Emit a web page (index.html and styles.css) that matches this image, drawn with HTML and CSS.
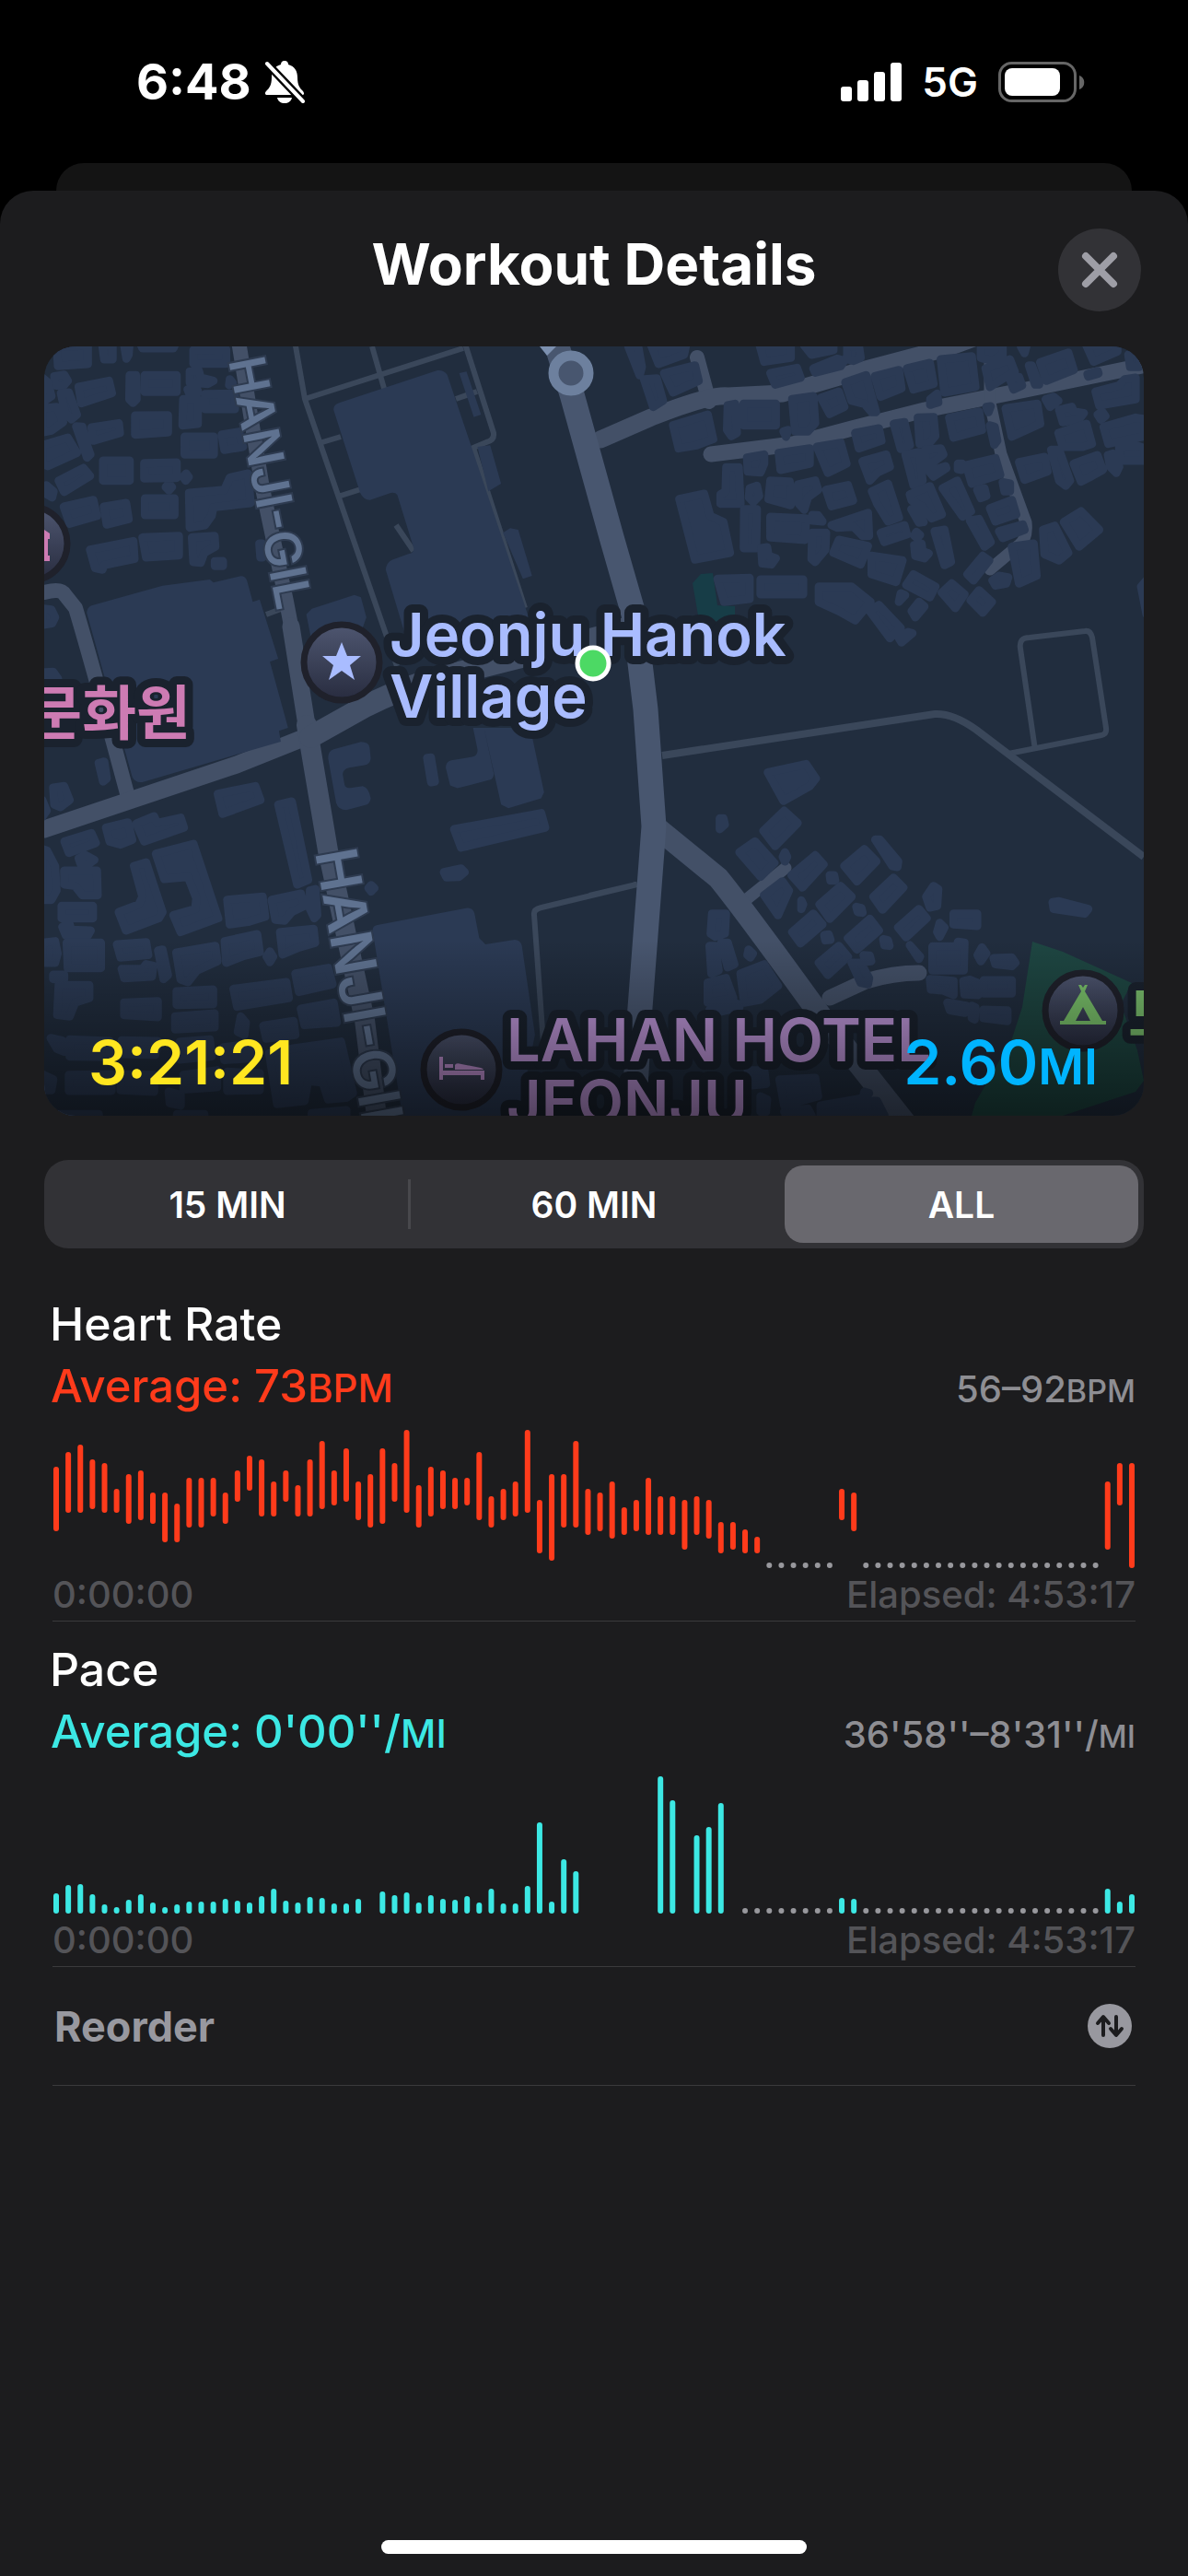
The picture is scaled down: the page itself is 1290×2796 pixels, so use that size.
FILE: index.html
```html
<!DOCTYPE html>
<html lang="en">
<head>
  <meta charset="UTF-8" />
  <meta name="viewport" content="width=device-width, initial-scale=1.0"/>
  <title>Workout Details</title>
  <link rel="stylesheet" href="styles.css">
</head>
<body>
  <div class="status-bar">
    <div class="status-left">
      <span class="clock">6:48</span>
      <svg class="bell" viewBox="0 0 44 46" width="44" height="46">
        <path fill="#fff" d="M22 0c3 0 4 2 4 4 7 2 10 7 10 14 0 9 3 12 6 15 2 3 1 4-1 4H3c-2 0-3-2-1-4 3-3 6-6 6-15C8 11 11 6 18 4c0-2 1-4 4-4zM14 40h16c-1 4-4 6-8 6s-7-2-8-6z"/>
        <path stroke="#000" stroke-width="9" stroke-linecap="round" d="M4 4l38 40"/>
        <path stroke="#fff" stroke-width="4" stroke-linecap="round" d="M3 3l39 41"/>
      </svg>
    </div>
    <div class="status-right">
      <svg viewBox="0 0 66 42" width="66" height="42" fill="#fff">
        <rect x="0" y="26" width="12" height="16" rx="3"/>
        <rect x="18" y="19" width="12" height="23" rx="3"/>
        <rect x="36" y="10" width="12" height="32" rx="3"/>
        <rect x="54" y="0" width="12" height="42" rx="3"/>
      </svg>
      <span class="network">5G</span>
      <svg viewBox="0 0 94 44" width="94" height="44">
        <rect x="1.5" y="1.5" width="82" height="41" rx="13" fill="none" stroke="#666" stroke-width="3"/>
        <rect x="7" y="7" width="60" height="30" rx="8" fill="#fff"/>
        <path fill="#666" d="M88 15c7 2 7 13 0 15z"/>
      </svg>
    </div>
  </div>
  <div class="back-card"></div>
  <main class="sheet">
    <header class="sheet-header">
      <h1>Workout Details</h1>
      <button class="close" aria-label="Close">
        <svg viewBox="0 0 40 40" width="40" height="40"><path stroke="#9e9ea6" stroke-width="8" stroke-linecap="round" d="M5 5l30 30M35 5L5 35"/></svg>
      </button>
    </header>

    <div class="map">
      <svg class="map-canvas" viewBox="48 376 1194 835" xml:lang="ko">
        <defs>
          <linearGradient id="pin" x1="0" y1="0" x2="0" y2="1">
            <stop offset="0" stop-color="#4e5670"/><stop offset="1" stop-color="#282c3f"/>
          </linearGradient>
          <linearGradient id="shade" x1="0" y1="0" x2="0" y2="1">
            <stop offset="0" stop-opacity="0"/><stop offset="1" stop-opacity=".55"/>
          </linearGradient>
        </defs>
        <rect x="48" y="376" width="1194" height="835" fill="#212d3e"/>

        <!-- footpaths -->
        <g class="path">
          <path d="M320 370L331 433 431 723M331 433L503 378M404 376L418 425M504 370L536 470Q537 478 528 480L514 486 570 660M350 480L370 474M370 538L392 531M495 433L518 425M289 667L305 661M430 570L449 598"/>
          <path d="M1124 814L1108 704Q1106 692 1118 692L1178 685Q1184 684 1186 692L1201 790Q1202 797 1196 798L1095 818"/>
          <path d="M640 972L691 960M692 960L588 985Q579 987 580 993L592 1160"/>
          <path class="wide" d="M719 820L1015 775Q1035 774 1060 792L1242 930"/>
        </g>
        <!-- streets -->
        <g class="road">
          <path stroke-width="16" d="M48 643Q66 638 70 645L82 660Q100 720 139 865M259 370L285 530 311 653 320 700M757 388L770 436"/>
          <path stroke-width="19" d="M316 680L333 787M48 900L257 830 337 798M652 477L707 453Q770 428 790 430L850 427 925 405 1027 378 1060 366"/>
          <path stroke-width="22" d="M333 787L356 923 396 1107 410 1220"/>
          <path stroke-width="24" d="M337 800L396 767Q450 740 499 730L657 690 690 678"/>
          <path stroke-width="17" d="M772 493L861 482 925 465 1004 445 1114 423 1250 395M901 1083L940 1065Q970 1056 998 1056"/>
          <path stroke-width="13" d="M1075 393L1075 437 1087 493 1114 567Q1116 585 1106 592L1075 618M812 975L853 942"/>
          <path stroke-width="24" d="M715 900L780 953Q810 990 893 1105L988 1225"/>
          <path class="main" d="M600 360L621 428 664 583 689 670 701 770 710 897 694 1107 688 1220"/>
        </g>

        <!-- parks -->
        <path fill="#173d47" d="M752 633L761 623 774 622 779 657 798 658 798 668 776 675 758 668z"/>
        <path fill="#1e4642" d="M1121 1022L1154 1033 1229 1067 1217 1090 1235 1140 1242 1173 1233 1185 1154 1211 1055 1211 1059 1197 1099 1127 1110 1093z"/>

        <!-- large blocks -->
        <g fill="#2b3a54" transform="translate(40 370) scale(.3954 .3333)">
          <path d="M137 885Q138 868 150 862L345 797 475 777 485 787 560 766Q572 765 577 780L593 850 612 842 663 1035 640 1045 690 1260 665 1270 670 1305 290 1437Q270 1440 262 1420z"/>
          <path d="M815 225Q814 208 830 202L1100 96Q1118 94 1127 110L1345 880 1370 970 1025 1010 958 745Q960 722 975 713L1022 693Q1036 690 1035 675L990 502Q985 493 972 495L915 518Q897 518 888 495z"/>
          <path d="M1160 105L1180 100 1220 240 1200 248zM1210 345L1245 340 1275 465 1240 490zM1280 625L1300 610 1322 615 1360 765 1335 775zM740 890L755 872 872 827 890 835 905 900 890 950 760 1010z"/>
          <path d="M922 1920Q922 1904 935 1902L1182 1847Q1198 1846 1202 1865L1215 1945 1232 1965 1312 1950Q1328 1950 1332 1970L1368 2260 1340 2420 1335 2530 1005 2530z"/>
          <path d="M800 1360Q800 1335 815 1330L890 1306Q912 1306 914 1325L917 1360Q915 1380 900 1382L858 1390Q840 1395 840 1412L845 1445Q848 1460 865 1455L895 1450Q912 1455 917 1490 915 1510 900 1512L850 1528Q828 1528 822 1505z"/>
          <path d="M1123 1390Q1123 1370 1138 1366L1195 1355Q1212 1350 1210 1330L1198 1260 1228 1260 1255 1410Q1255 1425 1243 1430L1155 1457 1135 1448zM1228 1260L1355 1260 1393 1470 1385 1490 1295 1522 1275 1510z"/>
        </g>

        <!-- houses, one group per map tile -->
        <g class="houses" transform="translate(40 370) scale(.3954 .3333)">
          <path d="M55 20 140 15 140 75 58 82zM180 15 208 15 208 60 185 60zM240 15 254 15 252 45 246 58zM285 10 380 10 375 24 290 24zM430 30 520 28 520 74 430 74zM48 115 75 110 85 130 72 148 50 145zM115 150 198 130 206 170 122 203zM255 112 272 112 274 190 264 202 254 190zM296 112 384 112 384 166 296 166zM420 100 445 98 450 120 485 130 470 140 420 135zM414 158 442 162 440 172 418 170zM530 125 538 137 528 144zM462 173 544 172 544 222 462 222zM402 190 442 190 442 270 400 275z"/>
          <path d="M15 120 30 135 40 180 15 200zM66 170 88 168 110 240 95 255 78 235zM15 220 55 215 72 265 40 292 15 298zM150 282 225 268 228 300 155 325zM270 243 360 242 360 298 270 305zM406 312 486 312 486 370 406 370zM508 305 555 296 566 345 515 355zM108 278 125 280 135 330 147 370 138 380zM15 340 85 315 110 365 30 408 15 400zM182 390 255 390 255 455 182 455zM295 398 384 396 384 446 295 448zM60 455 128 414 146 440 75 492zM410 432 417 443 409 455 402 443zM363 465 371 476 363 487 354 476zM26 470 46 490 42 510 28 500z"/>
          <path d="M74 540 155 518 165 570 90 595zM184 540 245 528 252 580 192 598zM297 513 378 513 378 567 297 567zM418 495 515 485 530 445 580 432 587 528 485 542 480 570 462 600 420 608zM146 680 265 652 268 710 185 730 180 745 160 740zM290 640 390 635 390 698 300 705zM426 640 488 635 490 670 460 690 450 722 430 720zM489 718 511 717 511 733 489 733zM611 660 618 660 620 705 614 705zM15 872 40 875 50 900 42 920 15 925zM15 1080 45 1078 58 1100 15 1110z"/>
        </g>
        <g class="houses" transform="translate(640 370) scale(.3954 .3333)">
          <path d="M107 18 134 18 144 85 138 112zM170 15 265 15 260 45 190 75zM150 125 185 122 202 195 175 215zM205 105 290 80 300 130 230 168zM468 15 553 15 553 55 480 68zM497 105 570 88 580 120 510 142zM590 15 670 15 670 30 610 45zM615 90 680 58 700 65 690 82 620 103zM708 20 740 15 745 55 725 65 708 60zM230 275 325 240 340 320 295 340 245 350zM380 210 400 205 405 300 390 310 378 290zM423 205 512 205 512 275 423 275zM557 190 615 180 620 268 600 295 565 295zM636 185 685 165 700 215 660 238zM703 135 760 112 770 160 787 232 775 232 755 205 720 195zM784 115 850 95 857 155 800 182z"/>
          <path d="M872 90 935 72 945 140 890 158zM965 60 1050 50 1060 150 975 168zM1075 15 1135 15 1135 45 1105 65 1075 55zM1088 90 1155 60 1168 100 1140 120 1100 150zM1155 125 1180 118 1188 145 1165 158zM1185 18 1200 18 1195 40zM1207 80 1215 80 1235 142 1224 142zM1238 70 1315 38 1330 95 1255 130zM1365 15 1450 15 1450 35 1385 68zM1480 45 1510 45 1510 85 1485 85zM1368 108 1396 98 1398 106 1370 116zM1390 165 1455 145 1470 125 1500 120 1500 190 1400 210zM1143 220 1230 205 1238 270 1160 312zM1253 190 1275 182 1288 195 1265 215zM1290 225 1325 215 1330 230 1358 235 1345 255 1300 265zM1396 240 1408 230 1417 245 1405 257zM988 250 1070 230 1078 290 1000 315zM902 250 945 248 950 310 930 338 907 335zM836 270 865 265 880 340 855 352zM730 300 795 285 802 325 740 350z"/>
          <path d="M1288 300 1365 270 1380 335 1355 345 1300 345zM1412 280 1500 250 1525 255 1525 310 1425 335zM1455 350 1500 340 1525 350 1525 390 1460 390zM1424 372 1438 367 1455 410 1447 430 1430 410zM1330 400 1395 372 1410 420 1380 440 1350 458zM1268 355 1290 355 1320 455 1308 472 1290 455zM1180 395 1250 378 1258 425 1195 452zM1035 405 1115 382 1128 435 1050 465zM1100 275 1113 280 1120 325 1112 338zM1090 215 1102 213 1096 232zM936 190 955 172 958 200 936 208zM1012 400 1024 400 1022 420 1012 418zM922 355 965 350 972 370 950 390 925 405zM933 425 978 408 980 415 945 442zM868 370 905 362 915 455 890 470zM750 392 815 370 825 410 790 430 770 455zM625 345 690 332 706 400 655 430zM520 365 605 350 605 400 525 420zM433 380 480 370 480 400 470 428 435 425zM376 412 410 412 415 530 360 530 360 500 374 490zM533 295 545 290 540 312z"/>
          <path d="M440 480 460 472 466 505 450 525 438 510zM497 455 550 458 553 535 492 515zM573 468 620 455 628 485 600 510 590 550 575 530zM650 485 710 470 724 520 665 538zM776 490 820 465 850 575 820 588 790 530zM880 500 935 473 968 565 940 578 915 540 885 520zM884 548 895 546 918 590 905 592zM970 480 1010 455 1048 555 1025 572zM1065 485 1085 480 1090 505 1075 512zM1135 460 1155 465 1155 490 1140 490zM1100 545 1160 518 1172 565 1115 588zM1125 620 1190 598 1195 615 1135 642zM1045 585 1070 580 1102 655 1085 670zM1246 615 1278 602 1315 690 1290 715 1250 695zM1303 590 1350 555 1400 615 1345 670zM247 515 315 498 332 570 368 590 386 690 290 712zM425 548 460 548 458 675 424 675zM497 573 595 578 592 648 497 640zM612 567 628 568 640 588 612 585zM612 625 650 625 648 680 620 720 610 710z"/>
          <path d="M665 600 765 560 768 635 750 635 725 605 680 608zM800 625 865 600 872 630 810 655zM898 622 908 632 900 642 892 634zM892 665 912 660 915 685 932 692 920 708 895 700zM948 620 975 615 993 720 975 730zM472 675 488 672 492 700 512 708 500 728 475 725zM670 690 685 648 765 668 745 728zM775 700 860 715 842 785 775 760zM870 795 890 760 950 800 935 835zM1038 760 1080 700 1098 715 1055 780zM1160 670 1220 660 1228 765 1180 790zM1107 780 1125 765 1150 770 1145 790 1115 797zM630 800 720 800 772 850 730 910 685 880 630 850zM770 880 795 860 855 935 825 968zM855 822 867 828 850 850zM885 880 905 850 920 865 895 900zM968 820 995 790 1030 825 1005 870zM1047 845 1070 812 1105 850 1080 885zM850 968 875 948 887 952 857 982zM352 775 440 772 440 840 370 850zM470 777 587 777 587 825 470 825zM1515 800 1530 780 1530 890z"/>
        </g>
        <g class="houses" transform="translate(40 790) scale(.3954 .3333)">
          <path d="M497 215 600 190 614 235 510 280zM663 250 700 240 745 495 715 510zM1072 98 1082 97 1093 175 1083 177zM1146 330 1385 278 1396 325 1165 390zM1118 470 1165 458 1175 470 1160 485 1125 487zM918 512 927 522 918 533 911 522zM45 195 75 190 90 235 65 258 48 250zM170 115 185 110 192 165 182 175zM15 235 27 270 15 290zM76 370 150 343 162 375 88 407zM115 425 135 415 158 430 140 445 120 443zM190 325 250 308 262 365 230 380 200 370zM273 312 322 288 330 310 395 293 404 325 295 370zM15 395 28 400 50 450 54 530 40 560 15 560zM75 465 165 465 167 545 125 545 105 515 76 510zM68 580 154 580 154 620 68 620zM70 648 90 640 95 658 148 660 140 677 80 677z"/>
          <path d="M82 700 176 700 176 782 85 782zM15 700 50 695 57 735 50 765 15 765zM45 804 75 804 75 818 45 818zM60 838 144 838 144 880 105 895 90 940 56 935zM267 450 300 438 345 600 335 620 245 660 225 600 280 575 290 550zM327 410 430 378 498 620 395 665 375 610 435 590 438 555 415 485 350 492zM523 560 620 550 627 615 580 632 530 640zM645 560 725 540 735 580 700 600 680 628 655 625zM750 530 765 525 770 610 762 620 750 590zM220 705 300 698 306 740 230 748zM233 785 290 785 300 770 320 775 316 810 240 815zM333 725 345 722 360 805 348 818zM383 732 490 710 496 760 440 790 415 828 395 820zM516 695 605 672 612 730 570 742 520 765zM668 665 760 655 764 700 720 715 675 738zM640 728 649 745 640 763 631 745z"/>
          <path d="M710 800 800 782 812 835 720 860zM540 850 685 828 692 880 550 908zM384 858 484 852 484 900 384 902zM380 940 488 930 488 975 380 982zM240 895 332 890 332 942 240 935zM560 940 574 960 570 1000 552 990zM622 970 705 955 710 1000 630 1012zM725 915 815 895 824 960 735 968zM638 1060 700 1045 835 1022 868 1190 850 1205 800 1210 785 1155 745 1150 735 1215 660 1225zM38 1010 70 1018 75 1055 55 1045zM90 1015 200 1020 200 1072 90 1070zM233 1018 332 1020 325 1065 233 1062zM393 1022 475 1015 480 1070 393 1080zM513 1040 595 1028 600 1075 515 1082zM88 1130 205 1128 205 1182 88 1182zM230 1128 322 1130 322 1185 230 1180zM403 1130 495 1115 495 1170 403 1178zM523 1120 612 1125 612 1180 523 1182zM362 1185 395 1195 395 1230 365 1222zM15 1128 45 1145 40 1180 15 1180zM60 1258 170 1258 170 1270 60 1270zM385 1258 460 1258 460 1270 385 1270zM755 1255 850 1245 850 1270 755 1270z"/>
        </g>
        <g class="houses" transform="translate(640 790) scale(.3954 .3333)">
          <path d="M490 145 595 118 622 165 605 190 533 238zM478 335 535 270 572 310 510 385zM412 405 455 370 508 440 470 485zM358 295 368 295 372 315 358 330zM555 480 620 415 643 445 585 520zM700 450 755 395 788 435 735 500zM785 364 798 364 848 435 846 453 832 450zM480 545 530 500 548 530 518 610zM632 575 690 515 720 550 660 622zM780 550 835 488 862 520 805 592zM925 550 945 515 958 525 955 580 935 585zM848 650 905 590 926 620 870 682zM557 665 615 605 640 640 580 702zM710 685 770 622 795 660 735 722zM630 765 685 710 710 745 655 805zM1000 605 1065 605 1065 645 1000 640zM1272 568 1290 565 1370 590 1360 605 1275 590z"/>
          <path d="M660 480 672 480 675 497 662 497zM582 562 587 575 582 590zM733 583 747 587 750 602 737 600zM645 675 657 673 662 690 648 692zM807 688 820 692 824 710 810 708zM753 740 770 742 774 760 757 762zM537 405 543 420 537 435 531 420zM962 635 975 650 962 680 955 665zM1078 715 1090 735 1075 760 1066 740zM437 722 449 735 442 748 434 740zM720 765 745 765 768 815 765 835 745 830zM880 708 908 745 905 752zM942 712 1010 712 1012 697 1030 700 1028 790 942 790zM1110 750 1160 748 1170 765 1160 776 1115 770zM935 818 1000 824 1000 870 970 855 938 852zM1027 825 1045 820 1065 830 1068 870 1030 868zM1083 822 1160 822 1160 865 1083 865zM983 895 1035 905 1030 928 990 920zM1050 905 1060 910 1058 950 1050 945zM1082 918 1148 920 1148 955 1082 945z"/>
          <path d="M337 605 375 605 372 670 345 680 333 670zM362 700 380 700 398 770 380 780zM330 710 345 710 355 790 335 800zM325 830 375 815 395 880 325 895zM415 800 480 770 518 840 470 885 425 895zM330 918 405 898 412 910 340 930zM522 1145 620 1140 628 1200 535 1230zM435 1115 480 1115 485 1160 440 1165zM635 1230 740 1208 750 1262 635 1262zM470 1200 488 1210 485 1250 470 1250zM535 1250 600 1240 610 1262 540 1262zM755 1185 768 1190 752 1200zM760 1215 790 1215 810 1262 770 1262z"/>
        </g>

        <!-- route marker -->
        <path fill="#7c90b0" d="M586 376L604 376 594 386z"/>
        <circle cx="620" cy="405" r="19" fill="#48566f" stroke="#6d809e" stroke-width="11"/>

        <!-- street names -->
        <text class="street" font-size="54" transform="translate(248 391) rotate(79)">HANJI-GIL</text>
        <text class="street" font-size="62" transform="translate(342 925) rotate(80)">HANJI-GIL</text>

        <!-- places -->
        <text class="place korean" x="207" y="797" text-anchor="end">문화원</text>
        <text class="place" x="423" y="712" fill="#a9bcff">Jeonju Hanok</text>
        <text class="place" x="423" y="779" fill="#a9bcff">Village</text>
        <text class="place" x="550" y="1152" fill="#bd95d8">LAHAN HOTEL</text>
        <text class="place" x="550" y="1219" fill="#bd95d8">JEONJU</text>
        <text class="place korean camp" x="1225" y="1124">노</text>

        <g fill="url(#pin)" stroke="#1f212b" stroke-width="7">
          <circle cx="33" cy="590" r="40"/>
          <circle cx="371" cy="719" r="41"/>
          <circle cx="501" cy="1161" r="41"/>
          <circle cx="1176" cy="1097" r="41"/>
        </g>
        <path fill="#cd7bb3" d="M36 584l12-9 6 4v6h-2v18h2v6H36z"/>
        <path fill="#a9bcff" d="M371 697l6 15h15l-12 10 5 16-14-10-14 10 5-16-12-10h15z"/>
        <path fill="#bd8fce" d="M477 1147h4v15h45v10h-4v-5h-41v5h-4zM483 1155h9v4h-9zM494 1156q1-3 7-1l21 4q3 1 3 2h-31z"/>
        <path fill="#79c06a" fill-rule="evenodd" d="M1171 1069h3l2 3 2-3h3l-3 7 19 32h4v4h-50v-4h4l19-32zM1176 1093l-8 15h16z"/>

        <rect x="48" y="1020" width="1194" height="191" fill="url(#shade)"/>
        <circle cx="644" cy="720" r="17" fill="#4cd964" stroke="#fff" stroke-width="5"/>
      </svg>
      <div class="map-stats">
        <span class="duration">3:21:21</span>
        <span class="distance">2.60<small>MI</small></span>
      </div>
    </div>

    <div class="segments">
      <button>15 MIN</button>
      <button>60 MIN</button>
      <button class="active" aria-pressed="true">ALL</button>
    </div>

    <section class="metric">
      <h2>Heart Rate</h2>
      <div class="metric-row">
        <p class="average heart">Average: 73<small>BPM</small></p>
        <p class="range">56–92<small>BPM</small></p>
      </div>
      <svg class="chart heart" id="heart-chart" viewBox="0 0 1176 150"></svg>
      <div class="metric-times"><span>0:00:00</span><span>Elapsed: 4:53:17</span></div>
    </section>

    <section class="metric">
      <h2>Pace</h2>
      <div class="metric-row">
        <p class="average pace">Average: 0'00''/<small>MI</small></p>
        <p class="range">36'58''–8'31''/<small>MI</small></p>
      </div>
      <svg class="chart pace" id="pace-chart" viewBox="0 0 1176 150"></svg>
      <div class="metric-times"><span>0:00:00</span><span>Elapsed: 4:53:17</span></div>
    </section>

    <button class="reorder">
      <span>Reorder</span>
      <svg viewBox="0 0 48 48" width="48" height="48">
        <circle cx="24" cy="24" r="24" fill="#98989f"/>
        <path fill="none" stroke="#1c1c1e" stroke-width="4" stroke-linecap="round" stroke-linejoin="round" d="M17 34V15M11 21l6-7 6 7M31 14v19M25 27l6 7 6-7"/>
      </svg>
    </button>
  </main>
  <div class="home-indicator"></div>
  <script src="charts.js"></script>
</body>
</html>
```
FILE: styles.css
```css
* { box-sizing: border-box; }
body {
  margin: 0;
  min-height: 100vh;
  display: flex;
  flex-direction: column;
  background-color: #000;
  color: #fff;
  font-family: Inter, "Noto Sans CJK KR", sans-serif;
}
h1, h2, p { margin: 0; }
small { line-height: 0; }
button {
  border: none;
  padding: 0;
  background: none;
  color: inherit;
  font-family: inherit;
  cursor: pointer;
}
svg { display: block; }

/* status bar */
.status-bar {
  display: flex;
  justify-content: space-between;
  align-items: center;
  height: 177px;
  padding: 0 112px 0 148px;
}
.status-left, .status-right {
  display: flex;
  align-items: center;
}
.status-left { gap: 14px; }
.status-right { gap: 22px; }
.clock {
  font-size: 54px;
  font-weight: 700;
}
.network {
  font-size: 44px;
  font-weight: 600;
}

/* sheet */
.back-card {
  height: 30px;
  margin: 0 61px;
  border-radius: 30px 30px 0 0;
  background-color: #141414;
}
.sheet {
  flex: 1;
  padding: 0 48px;
  border-radius: 36px 36px 0 0;
  background-color: #1c1c1e;
}
.sheet-header {
  display: grid;
  grid-template-columns: 1fr auto 1fr;
  padding: 41px 3px 38px;
}
h1 {
  grid-column: 2;
  font-size: 62px;
  font-weight: 700;
  line-height: 78px;
}
.close {
  display: flex;
  justify-content: center;
  align-items: center;
  justify-self: end;
  width: 90px;
  height: 90px;
  border-radius: 50%;
  background-color: #323236;
}

/* map */
.map {
  position: relative;
  border-radius: 34px;
  overflow: hidden;
}
.map-canvas {
  width: 100%;
  height: auto;
}
.map-stats {
  position: absolute;
  left: 0;
  right: 0;
  bottom: 26px;
  display: flex;
  justify-content: space-between;
  padding: 0 50px 0 48px;
  font-size: 66px;
  font-weight: 600;
  line-height: 64px;
}
.map-stats small { font-size: 54px; }
.duration { color: #ffe620; }
.distance { color: #00b4ff; }
.path {
  fill: none;
  stroke: #3a475a;
  stroke-width: 6px;
}
.path .wide { stroke-width: 8px; }
.road {
  fill: none;
  stroke: #435067;
  stroke-linecap: round;
  stroke-linejoin: round;
}
.road .main {
  stroke: #48566f;
  stroke-width: 27px;
}
.houses path {
  fill: #2b3a54;
  stroke: #2b3a54;
  stroke-width: 9px;
  stroke-linejoin: round;
  vector-effect: non-scaling-stroke;
}
.street {
  fill: #5f7290;
  stroke: #2e3b50;
  stroke-width: 4px;
  paint-order: stroke;
  font-weight: 600;
}
.place {
  stroke: #1a222e;
  stroke-width: 18px;
  stroke-linejoin: round;
  paint-order: stroke;
  font-size: 65px;
  font-weight: 600;
}
.korean {
  fill: #cd7bb3;
  font-family: "Noto Sans CJK KR", sans-serif;
  font-size: 64px;
  font-weight: 700;
}
.camp { fill: #79bd6c; }

/* time filter */
.segments {
  display: grid;
  grid-template-columns: repeat(3, 1fr);
  height: 96px;
  margin: 48px 0 30px;
  border-radius: 26px;
  background-color: #323236;
}
.segments button {
  position: relative;
  font-size: 39px;
  font-weight: 600;
}
.segments button:first-child::after {
  content: "";
  position: absolute;
  right: 0;
  top: 21px;
  width: 3px;
  height: 54px;
  background-color: #48484c;
}
.segments .active {
  margin: 6px 6px 6px 8px;
  border-radius: 20px;
  background-color: #69686e;
}

/* metrics */
.metric {
  margin: 0 9px;
  padding-top: 19px;
  border-bottom: 1px solid #3a3a3c;
}
h2, .average {
  font-size: 50px;
  font-weight: 500;
  line-height: 67px;
}
h2 { margin-left: -3px; }
.average {
  margin-left: -2px;
  font-size: 49px;
}
.average small { font-size: 42px; }
.metric-row {
  display: flex;
  justify-content: space-between;
  align-items: baseline;
  margin-bottom: 14px;
}
.range {
  color: #8e8e93;
  font-size: 40px;
  font-weight: 500;
}
.range small { font-size: 34px; }
.heart { color: #ff3b1b; }
.pace { color: #3ce8e4; }
.chart {
  width: 100%;
  height: auto;
}
.chart line {
  stroke: currentColor;
  stroke-width: 6px;
  stroke-linecap: round;
}
.chart circle { fill: #98989d; }
.metric-times {
  display: flex;
  justify-content: space-between;
  color: #545458;
  font-size: 40px;
  font-weight: 500;
  line-height: 57px;
}
.reorder {
  display: flex;
  justify-content: space-between;
  align-items: center;
  width: calc(100% - 18px);
  height: 129px;
  margin: 0 9px;
  padding: 0 4px 0 2px;
  border-bottom: 1px solid #3a3a3c;
  color: #98989f;
  font-size: 45px;
  font-weight: 700;
}
.home-indicator {
  position: fixed;
  left: 50%;
  bottom: 24px;
  width: 462px;
  height: 15px;
  margin-left: -231px;
  border-radius: 8px;
  background-color: #fff;
}
```
FILE: charts.js
```javascript
// one entry per slot: [high, low] in bpm, '.' = no data, null = empty
const heartRate = [
  [82,66],[86,71],[88,71],[84,72],[83,71],[76,71],[80,68],[81,69],[75,68],[75,63],
  [72,63],[79,67],[79,67],[79,70],[75,68],[81,74],[85,77],[84,70],[78,70],[81,74],
  [77,70],[84,70],[89,72],[81,73],[87,74],[78,69],[80,67],[87,68],[83,74],[92,71],
  [77,67],[82,70],[81,72],[79,72],[79,73],[86,69],[74,67],[76,69],[78,70],[92,71],
  [73,60],[80,58],[80,67],[89,67],[76,65],[75,66],[78,64],[71,65],[73,66],[79,65],
  [74,65],[74,65],[73,61],[74,65],[73,64],[67,60],[67,61],[65,60],[63,60],
  ...Array(6).fill('.'), [76,69],[75,66], ...Array(20).fill('.'), [78,61],[83,73],[83,56]
];

const pace = [
  22,31,32,21,10,7,15,21,12,6,10,13,13,13,16,14,12,19,27,14,12,18,17,11,11,16,
  null,24,20,23,12,20,16,15,19,12,27,11,11,30,99,13,59,46,
  ...Array(6).fill(null), 149,123,null,85,94,120,null,
  ...Array(8).fill('.'), 17,16, ...Array(20).fill('.'), 27,13,21
];

function drawChart(id, data, toSpan) {
  let out = '';
  data.forEach((value, i) => {
    const x = 4 + i * 1168 / 89;
    if (value === null) return;
    if (value === '.') {
      out += `<circle cx="${x}" cy="147" r="3"/>`;
      return;
    }
    const [top, bottom] = toSpan(value);
    out += `<line x1="${x}" x2="${x}" y1="${top}" y2="${bottom}"/>`;
  });
  document.getElementById(id).innerHTML = out;
}

drawChart('heart-chart', heartRate, v => [3 + (92 - v[0]) * 4, 3 + (92 - v[1]) * 4]);
drawChart('pace-chart', pace, v => [Math.min(153 - v, 146), 147]);
```
